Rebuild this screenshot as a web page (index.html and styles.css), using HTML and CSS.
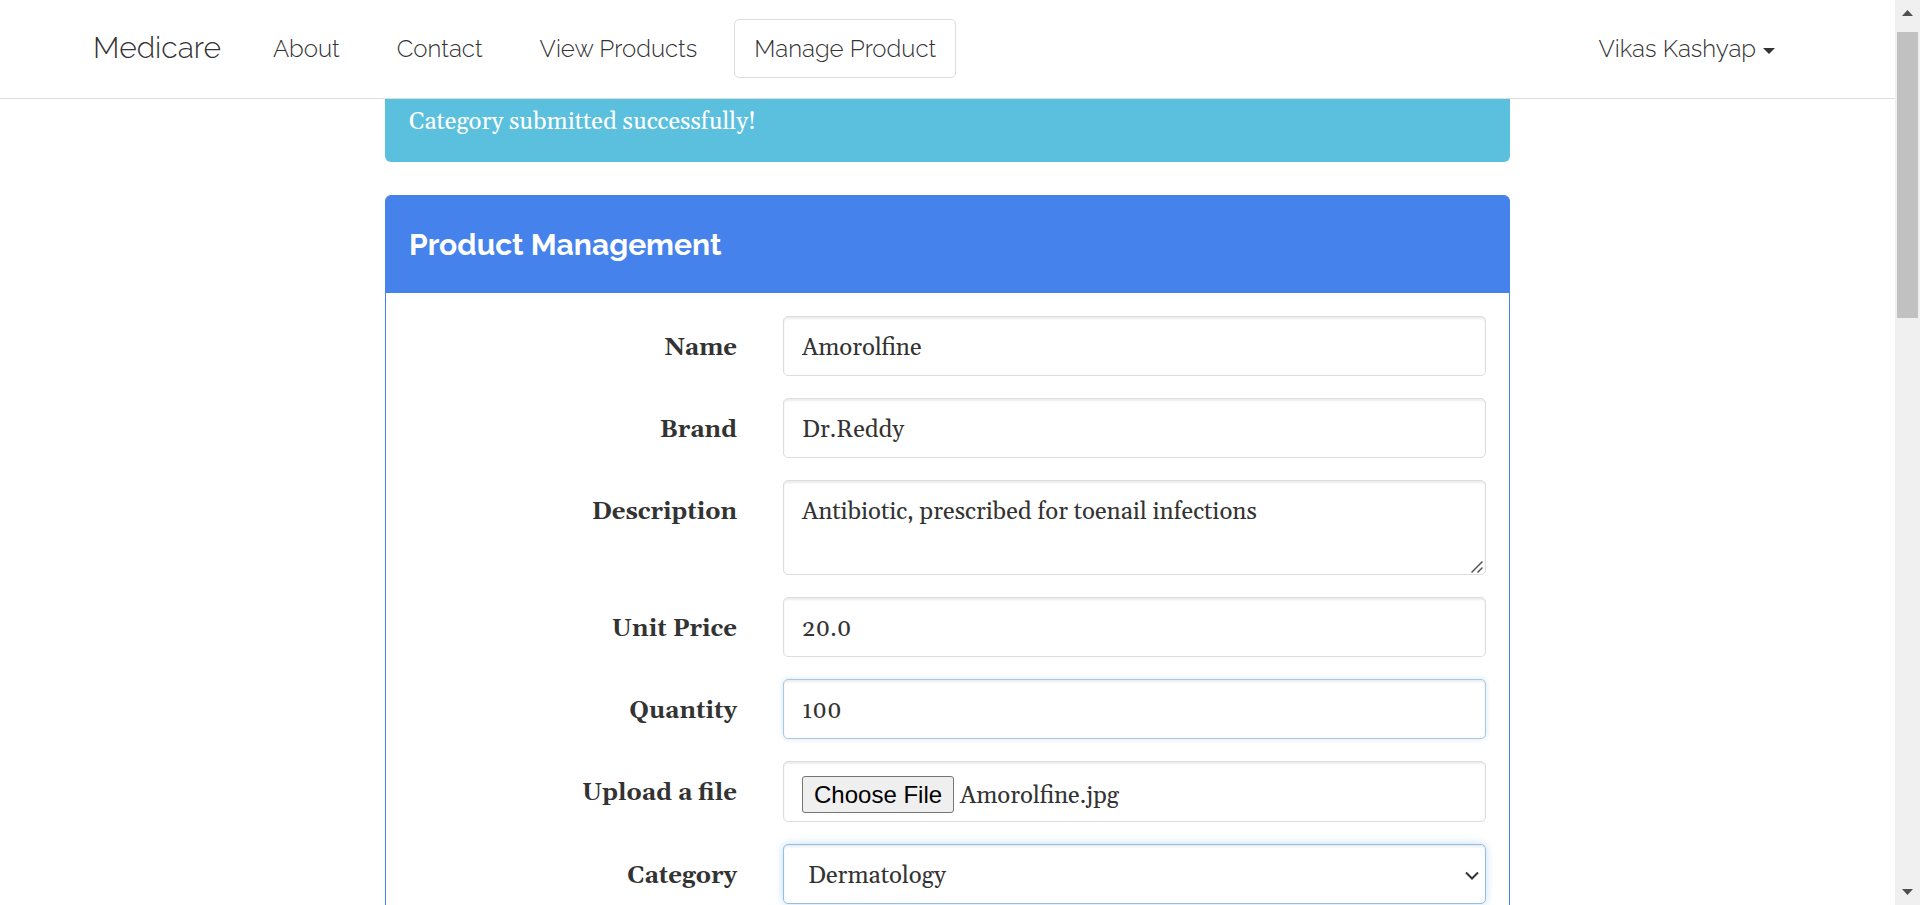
FILE: index.html
```html
<!DOCTYPE html>
<html lang="en">
<head>
  <meta charset="utf-8">
  <title>Medicare - Manage Product</title>
  <link rel="stylesheet" href="styles.css">
</head>
<body>
  <div class="page">
    <nav class="navbar">
      <a class="brand" href="#">Medicare</a>
      <ul class="nav-links">
        <li><a class="nav-link" href="#">About</a></li>
        <li><a class="nav-link" href="#">Contact</a></li>
        <li><a class="nav-link" href="#">View Products</a></li>
        <li><a class="nav-link active" href="#">Manage Product</a></li>
      </ul>
      <button class="user-menu" type="button">Vikas Kashyap<span class="caret"></span></button>
    </nav>

    <main class="content">
      <div class="alert" role="status">Category submitted successfully!</div>

      <section class="panel">
        <header class="panel-heading">
          <h4 class="panel-title">Product Management</h4>
        </header>
        <form class="panel-body">
          <div class="form-group">
            <label class="form-label" for="name">Name</label>
            <input class="field" type="text" id="name" value="Amorolfine">
          </div>
          <div class="form-group">
            <label class="form-label" for="brand">Brand</label>
            <input class="field" type="text" id="brand" value="Dr.Reddy">
          </div>
          <div class="form-group">
            <label class="form-label" for="description">Description</label>
            <div class="field-wrap">
              <textarea class="field field-area" id="description">Antibiotic, prescribed for toenail infections</textarea>
              <svg class="grip" viewBox="0 0 12 12" aria-hidden="true"><path d="M.5 11.5 11.5.5M6.5 11.5 11.5 6.5" fill="none" stroke="#555" stroke-width="1.5"/></svg>
            </div>
          </div>
          <div class="form-group">
            <label class="form-label" for="price">Unit Price</label>
            <input class="field" type="text" id="price" value="20.0">
          </div>
          <div class="form-group">
            <label class="form-label" for="quantity">Quantity</label>
            <input class="field field-leaving" type="text" id="quantity" value="100">
          </div>
          <div class="form-group">
            <label class="form-label" for="file">Upload a file</label>
            <input class="field field-file" type="file" id="file">
          </div>
          <div class="form-group">
            <label class="form-label" for="category">Category</label>
            <div class="field-wrap">
              <select class="field field-select" id="category"><option>Dermatology</option></select>
              <svg class="chevron" viewBox="0 0 14 9" aria-hidden="true"><path d="M1 1.5 7 7.5 13 1.5" fill="none" stroke="#333" stroke-width="2"/></svg>
            </div>
          </div>
        </form>
      </section>
    </main>
  </div>

  <div class="scrollbar" aria-hidden="true">
    <svg class="arrow" viewBox="0 0 11 6"><path d="M0 6 5.5 0 11 6z" fill="#505050"/></svg>
    <div class="track"><div class="thumb"></div></div>
    <svg class="arrow" viewBox="0 0 11 6"><path d="M0 0 5.5 6 11 0z" fill="#505050"/></svg>
  </div>
  <script src="app.js"></script>
</body>
</html>
```
FILE: styles.css
```css
* {
  box-sizing: border-box;
}

body {
  display: grid;
  grid-template-columns: 1fr 25px;
  height: 100vh;
  margin: 0;
  overflow: hidden;
  background: #fff;
  color: #333;
  font: 24px/34px Gelasio, Georgia, "Liberation Serif", serif;
}

.page {
  min-width: 0;
  overflow: hidden;
}

/* Navigation */
.navbar {
  display: flex;
  align-items: center;
  padding: 19px 100px 20px 73px;
  border-bottom: 1px solid #ddd;
  font-family: Raleway, Lato, sans-serif;
  font-weight: 300;
}

.brand {
  padding: 0 12px 2px 20px;
  color: inherit;
  font-size: 30px;
  text-decoration: none;
}

.nav-links {
  display: flex;
  gap: 17px;
  margin: 0;
  padding: 0 0 0 20px;
  list-style: none;
}

.nav-link {
  display: block;
  padding: 12px 19px 11px;
  border: 1px solid transparent;
  border-radius: 5px;
  color: inherit;
  text-decoration: none;
}

.nav-link.active {
  border-color: #ddd;
}

.user-menu {
  display: flex;
  align-items: center;
  gap: 7px;
  margin-left: auto;
  padding: 12px 20px 11px;
  border: 0;
  background: none;
  color: inherit;
  font: inherit;
}

.caret {
  border: 6px solid transparent;
  border-top-color: #333;
  border-bottom: 0;
  margin-top: 4px;
}

/* Content */
.content {
  max-width: 1125px;
  margin: 0 auto;
}

.alert {
  margin-bottom: 33px;
  padding: 6px 24px 23px;
  border-radius: 0 0 6px 6px;
  background: #5bc0de;
  color: #fff;
}

.panel {
  border: 1px solid #4582ec;
  border-radius: 6px;
}

.panel-heading {
  padding: 32px 23px 31px;
  background: #4582ec;
  border-radius: 4px 4px 0 0;
}

.panel-title {
  margin: 0;
  color: #fff;
  font: bold 30px/34px Raleway, Lato, sans-serif;
}

.panel-body {
  display: grid;
  gap: 22px;
  padding: 23px;
}

.form-group {
  display: grid;
  grid-template-columns: 7fr 15fr;
  gap: 46px;
}

.form-label {
  padding-top: 15px;
  font-weight: bold;
  text-align: right;
}

.field {
  display: block;
  width: 100%;
  height: 60px;
  margin: 0;
  padding: 14px 18px 10px;
  border: 1px solid #ddd;
  border-radius: 5px;
  background: #fff;
  box-shadow: inset 0 2px 2px rgba(0, 0, 0, 0.08);
  color: #333;
  font: inherit;
  outline: 0;
}

.field-wrap {
  position: relative;
}

.field-area {
  height: 95px;
  resize: none;
}

.grip {
  position: absolute;
  right: 3px;
  bottom: 2px;
  width: 12px;
  height: 12px;
  pointer-events: none;
}

.field-leaving {
  border-color: #a8c9e6;
  box-shadow: inset 0 2px 2px rgba(0, 0, 0, 0.08), 0 0 5px rgba(102, 175, 233, 0.3);
}

.field-file {
  height: 61px;
}

.field-file::file-selector-button {
  height: 37px;
  margin: 0 6px 0 0;
  padding: 0 11px;
  border: 1px solid #767676;
  border-radius: 3px;
  background: #efefef;
  color: #000;
  font: 24px/32px "Liberation Sans", Arial, sans-serif;
}

.field-select {
  padding-left: 24px;
  border-color: #8fc0ea;
  box-shadow: inset 0 2px 2px rgba(0, 0, 0, 0.08), 0 0 8px rgba(102, 175, 233, 0.4);
  appearance: none;
}

.chevron {
  position: absolute;
  top: 27px;
  right: 7px;
  width: 14px;
  height: 9px;
  pointer-events: none;
}

/* Window scrollbar */
.scrollbar {
  display: flex;
  flex-direction: column;
  align-items: center;
  padding: 10px 2px;
  background: #f0f0f0;
}

.arrow {
  width: 11px;
  height: 6px;
}

.track {
  flex: 1;
  align-self: stretch;
  padding: 16px 0;
}

.thumb {
  height: 34%;
  background: #c1c1c1;
}
```
FILE: app.js
```js
const picked = new DataTransfer();
picked.items.add(new File([''], 'Amorolfine.jpg', { type: 'image/jpeg' }));
document.getElementById('file').files = picked.files;
```
